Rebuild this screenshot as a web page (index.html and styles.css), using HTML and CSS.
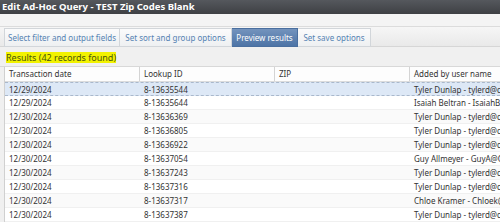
FILE: index.html
```html
<!DOCTYPE html>
<html>
<head>
<meta charset="utf-8">
<link rel="stylesheet" href="styles.css">
</head>
<body>
<div class="titlebar">Edit Ad-Hoc Query - TEST Zip Codes Blank</div>
<div class="topband"></div>
<div class="tabstrip">
  <div class="tab t1">Select filter and output fields</div>
  <div class="tab t2">Set sort and group options</div>
  <div class="tab t3 active">Preview results</div>
  <div class="tab t4">Set save options</div>
</div>
<div class="results"><span class="hl">Results (42 records found)</span></div>
<div class="grid">
  <div class="row head">
    <div class="cell">Transaction date</div><div class="cell">Lookup ID</div><div class="cell">ZIP</div><div class="cell">Added by user name</div>
  </div>
  <div class="row sel"><div class="cell">12/29/2024</div><div class="cell">8-13635544</div><div class="cell"></div><div class="cell">Tyler Dunlap - tylerd@cr</div></div>
  <div class="row"><div class="cell">12/29/2024</div><div class="cell">8-13635644</div><div class="cell"></div><div class="cell">Isaiah Beltran - IsaiahB@</div></div>
  <div class="row alt"><div class="cell">12/30/2024</div><div class="cell">8-13636369</div><div class="cell"></div><div class="cell">Tyler Dunlap - tylerd@cr</div></div>
  <div class="row"><div class="cell">12/30/2024</div><div class="cell">8-13636805</div><div class="cell"></div><div class="cell">Tyler Dunlap - tylerd@cr</div></div>
  <div class="row alt"><div class="cell">12/30/2024</div><div class="cell">8-13636922</div><div class="cell"></div><div class="cell">Tyler Dunlap - tylerd@cr</div></div>
  <div class="row"><div class="cell">12/30/2024</div><div class="cell">8-13637054</div><div class="cell"></div><div class="cell">Guy Allmeyer - GuyA@C</div></div>
  <div class="row alt"><div class="cell">12/30/2024</div><div class="cell">8-13637243</div><div class="cell"></div><div class="cell">Tyler Dunlap - tylerd@cr</div></div>
  <div class="row"><div class="cell">12/30/2024</div><div class="cell">8-13637316</div><div class="cell"></div><div class="cell">Tyler Dunlap - tylerd@cr</div></div>
  <div class="row alt"><div class="cell">12/30/2024</div><div class="cell">8-13637317</div><div class="cell"></div><div class="cell">Chloe Kramer - Chloek@</div></div>
  <div class="row"><div class="cell">12/30/2024</div><div class="cell">8-13637387</div><div class="cell"></div><div class="cell">Tyler Dunlap - tylerd@cr</div></div>
</div>
</body>
</html>
```

FILE: styles.css
```css
* { box-sizing: border-box; }
html, body { margin: 0; padding: 0; }
body {
  width: 500px;
  height: 222px;
  overflow: hidden;
  background: #f0f0f0;
  font-family: "Noto Sans", "Open Sans", sans-serif;
  font-size: 8px;
  color: #333;
}
.titlebar {
  height: 14px;
  background: linear-gradient(#55585d, #3e4044);
  color: #fff;
  font-weight: bold;
  font-size: 9.5px;
  line-height: 14px;
  padding-left: 2px;
  white-space: nowrap;
}
.topband {
  height: 13px;
  background: #f4f4f4;
  border-bottom: 1px solid #dcdcdc;
}
.tabstrip {
  display: flex;
  height: 20px;
  padding: 1px 0 0 4px;
  background: linear-gradient(#f6f6f6, #e9e9e9);
  border-bottom: 1px solid #d6d6d6;
}
.tab {
  height: 19px;
  line-height: 18px;
  text-align: center;
  color: #5583b3;
  white-space: nowrap;
  background: linear-gradient(#fbfbfb, #eef0f2);
  border: 1px solid #d2d6da;
  border-left: none;
}
.t1 { width: 116px; border-left: 1px solid #d2d6da; }
.t2 { width: 112px; }
.t3 { width: 66px; }
.t4 { width: 73px; }
.tab.active {
  color: #fff;
  background: linear-gradient(#7393bd, #4d74a6);
  border-color: #4a6f9f;
}
.results {
  height: 20px;
  padding: 5px 0 0 6px;
  border-bottom: 1px solid #d8d8d8;
}
.hl {
  background: #f2f200;
  color: #48560c;
  font-size: 9px;
  line-height: 11px;
  display: inline-block;
  white-space: nowrap;
}
.grid {
  margin-left: 4px;
  border-left: 1px solid #d0d0d0;
  background: #fff;
}
.row {
  display: grid;
  grid-template-columns: 135px 135px 135px 91px;
  height: 14px;
  line-height: 13px;
  border-bottom: 1px solid #f0f0f0;
  background: #fff;
  white-space: nowrap;
}
.row.alt { background: #fafafa; }
.row.head {
  height: 15px;
  line-height: 14px;
  background: #fdfdfd;
  border-bottom: 1px solid #dcdcdc;
}
.head .cell { border-right: 1px solid #d4d4d4; }
.row.sel {
  background: #dde8f6;
  border-top: 1px dashed #a9b8cc;
  border-bottom: 1px dashed #a9b8cc;
}
.cell {
  padding-left: 4px;
  overflow: hidden;
}
```
